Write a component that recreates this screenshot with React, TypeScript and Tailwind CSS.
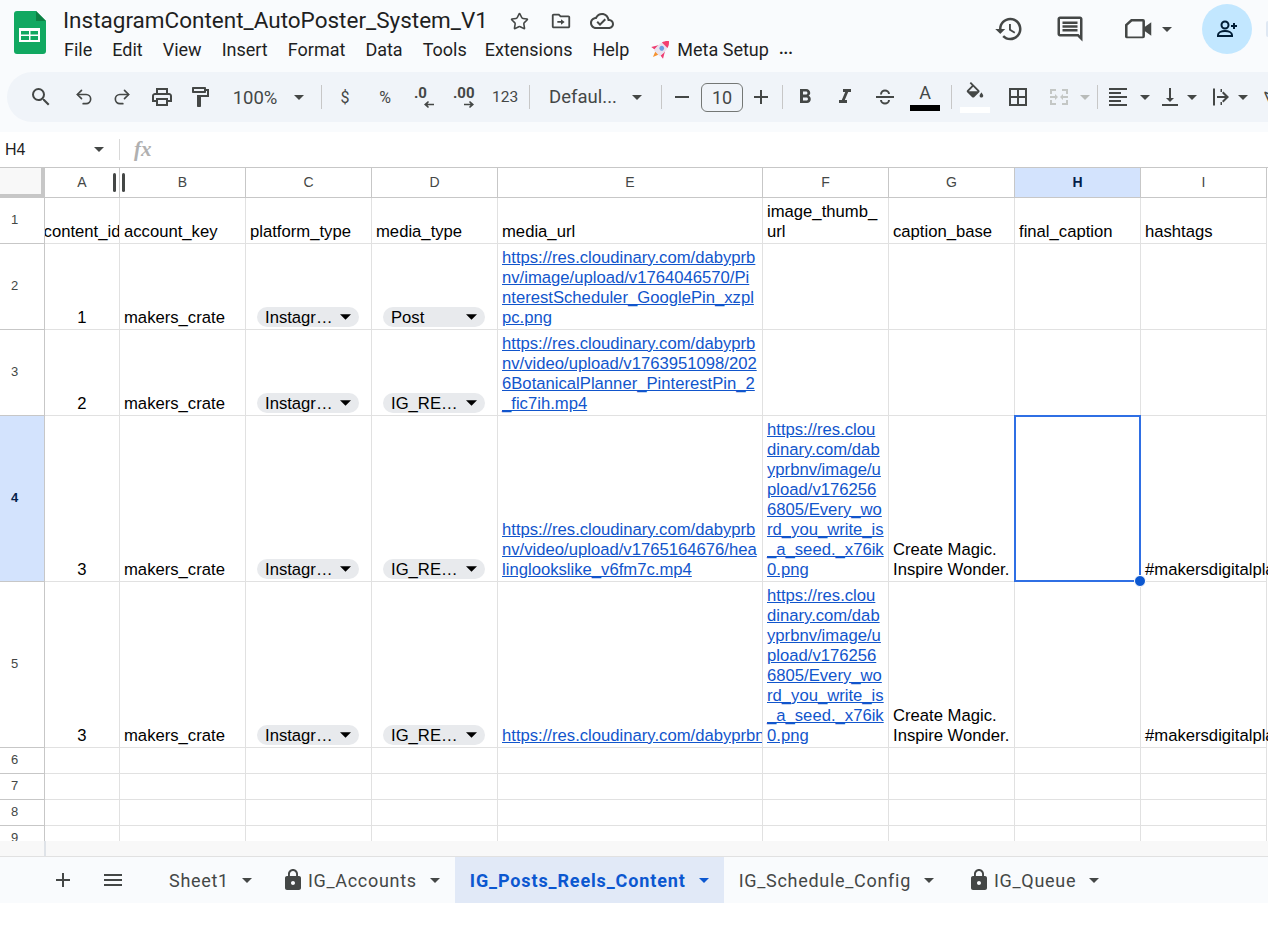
import { Star, Undo2, Redo2 } from 'lucide-react';
import type { ReactNode } from 'react';

// material-style icon
function Icon({ d, className = '' }: { d: string; className?: string }) {
  return (
    <svg viewBox="0 0 24 24" className={`w-6 h-6 shrink-0 fill-current ${className}`}>
      <path d={d} />
    </svg>
  );
}

function Caret({ className = '' }: { className?: string }) {
  return (
    <svg viewBox="0 0 10 5" className={`w-[10px] h-[5px] shrink-0 fill-current ${className}`}>
      <path d="M0 0h10L5 5z" />
    </svg>
  );
}

function Divider({ className = '' }: { className?: string }) {
  return <div className={`w-px h-6 bg-[#c7c7c7] shrink-0 ${className}`} />;
}

const icons = {
  search: 'M15.5 14h-.79l-.28-.27A6.471 6.471 0 0 0 16 9.5 6.5 6.5 0 1 0 9.5 16c1.61 0 3.09-.59 4.23-1.57l.27.28v.79l5 4.99L20.49 19l-4.99-5zm-6 0C7.01 14 5 11.99 5 9.5S7.01 5 9.5 5 14 7.01 14 9.5 11.99 14 9.5 14z',
  print: 'M19 8h-1V3H6v5H5c-1.66 0-3 1.34-3 3v6h4v4h12v-4h4v-6c0-1.66-1.34-3-3-3zM8 5h8v3H8V5zm8 12v2H8v-4h8v2zm2-2v-2H6v2H4v-4c0-.55.45-1 1-1h14c.55 0 1 .45 1 1v4h-2z',
  paint: 'M18 4V3c0-.55-.45-1-1-1H5c-.55 0-1 .45-1 1v4c0 .55.45 1 1 1h12c.55 0 1-.45 1-1V6h1v4H9v11c0 .55.45 1 1 1h2c.55 0 1-.45 1-1v-9h8V4h-3zm-2 2H6V4h10v2z',
  history: 'M13 3c-4.97 0-9 4.03-9 9H1l3.89 3.89.07.14L9 12H6c0-3.87 3.13-7 7-7s7 3.13 7 7-3.13 7-7 7c-1.93 0-3.68-.79-4.94-2.06l-1.42 1.42C8.27 19.99 10.51 21 13 21c4.97 0 9-4.03 9-9s-4.03-9-9-9zm-1 5v5l4.28 2.54.72-1.21-3.5-2.08V8H12z',
  comment: 'M20 2H4c-1.1 0-2 .9-2 2v12c0 1.1.9 2 2 2h14l4 4V4c0-1.1-.9-2-2-2zm0 15.17L18.83 16H4V4h16v13.17zM6 12h12v2H6zm0-3h12v2H6zm0-3h12v2H6z',
  move: 'M20 6h-8l-2-2H4c-1.1 0-2 .9-2 2v12c0 1.1.9 2 2 2h16c1.1 0 2-.9 2-2V8c0-1.1-.9-2-2-2zm0 12H4V6h5.17l2 2H20v10zm-8-4H8v-2h4v-2l4 3-4 3v-2z',
  cloud: 'M19.35 10.04C18.67 6.59 15.64 4 12 4 9.11 4 6.6 5.64 5.35 8.04 2.34 8.36 0 10.91 0 14c0 3.31 2.69 6 6 6h13c2.76 0 5-2.24 5-5 0-2.64-2.05-4.78-4.65-4.96zM19 18H6c-2.21 0-4-1.79-4-4 0-2.05 1.53-3.76 3.56-3.97l1.07-.11.5-.95C8.08 7.14 9.94 6 12 6c2.62 0 4.88 1.86 5.39 4.43l.3 1.5 1.53.11c1.56.1 2.78 1.41 2.78 2.96 0 1.65-1.35 3-3 3zm-9-3.82l-2.09-2.09L6.5 13.5 10 17l6.01-6.01-1.41-1.41z',
  video: 'M4 9l4-3.700h8a1.300 1.300 0 0 1 1.300 1.300V10.500l4.200-3v9l-4.200-3v3.400a1.300 1.300 0 0 1-1.300 1.300H5.300A1.300 1.300 0 0 1 4 17.400zM5.700 9.700V17h9.900V7H8.700z',
  bold: 'M15.6 10.79c.97-.67 1.65-1.77 1.65-2.79 0-2.26-1.75-4-4-4H7v14h7.04c2.09 0 3.71-1.7 3.71-3.79 0-1.52-.86-2.82-2.15-3.42zM10 6.5h3c.83 0 1.5.67 1.5 1.5s-.67 1.5-1.5 1.5h-3v-3zm3.5 9H10v-3h3.5c.83 0 1.5.67 1.5 1.5s-.67 1.5-1.5 1.5z',
  italic: 'M10 4v3h2.21l-3.42 8H6v3h8v-3h-2.21l3.42-8H18V4z',
  fill: 'M16.56 8.94L7.62 0 6.21 1.41l2.38 2.38-5.15 5.15c-.59.59-.59 1.54 0 2.12l5.5 5.5c.29.29.68.44 1.06.44s.77-.15 1.06-.44l5.5-5.5c.59-.58.59-1.53 0-2.12zM5.21 10L10 5.21 14.79 10H5.21zM19 11.5s-2 2.17-2 3.5c0 1.1.9 2 2 2s2-.9 2-2c0-1.33-2-3.5-2-3.5z',
  borders: 'M3 3v18h18V3H3zm8 16H5v-6h6v6zm0-8H5V5h6v6zm8 8h-6v-6h6v6zm0-8h-6V5h6v6z',
  align: 'M15 15H3v2h12v-2zm0-8H3v2h12V7zM3 13h18v-2H3v2zm0 8h18v-2H3v2zM3 3v2h18V3H3z',
  valign: 'M16 13h-3V3h-2v10H8l4 4 4-4zM4 19v2h16v-2H4z',
  wrap: 'M3 3.500h2v17H3zM7 11h8l-3-3 1.400-1.400L19 12l-5.600 5.400L12 16l3-3H7zM10.500 4H12v3h-1.500zM10.500 17H12v3h-1.500z',
  merge: 'M3 4h6v2H5v3H3zM15 4h6v5h-2V6h-4zM3 15h2v3h4v2H3zM19 15h2v5h-6v-2h4zM3 11h5V9l3 3-3 3v-2H3zM21 11h-5V9l-3 3 3 3v-2h5z',
  lock: 'M18 8h-1V6c0-2.76-2.24-5-5-5S7 3.24 7 6v2H6c-1.1 0-2 .9-2 2v10c0 1.1.9 2 2 2h12c1.1 0 2-.9 2-2V10c0-1.1-.9-2-2-2zm-6 9c-1.1 0-2-.9-2-2s.9-2 2-2 2 .9 2 2-.9 2-2 2zm3.1-9H8.9V6c0-1.71 1.39-3.1 3.1-3.1 1.71 0 3.1 1.39 3.1 3.1v2z',
  plus: 'M19 13h-6v6h-2v-6H5v-2h6V5h2v6h6z',
  minus: 'M19 13H5v-2h14z',
  menu: 'M3 18h18v-2H3v2zm0-5h18v-2H3v2zm0-7v2h18V6H3z',
};

function Logo() {
  return (
    <svg viewBox="0 0 32 43" className="w-8 h-[43px] shrink-0">
      <path d="M3 0h19l10 10v30a3 3 0 0 1-3 3H3a3 3 0 0 1-3-3V3a3 3 0 0 1 3-3z" fill="#11a861" />
      <path d="M22 0l10 10h-10z" fill="#0c8043" />
      <path d="M5 17h21v14H5z" fill="#fff" />
      <path d="M7 20h8v3.500H7zM16.500 20h7.500v3.500h-7.500zM7 25h8v4H7zM16.500 25h7.500v4h-7.500z" fill="#11a861" />
    </svg>
  );
}

function Rocket() {
  return (
    <svg viewBox="0 0 20 20" className="w-[19px] h-[19px] shrink-0">
      <g transform="rotate(45 10 10) translate(10 10) scale(1.25) translate(-10 -10)">
        <path d="M8 14h4l-2 5z" fill="#f59331" />
        <path d="M6.500 8l-3.500 6 3.500-.5zM13.500 8l3.500 6-3.500-.5z" fill="#ee3f73" />
        <path d="M10 0c4 3 4.500 8 3.500 14.500h-7C5.500 8 6 3 10 0z" fill="#e9e3ee" />
        <path d="M10 0c1.700 1.300 2.800 3 3.300 5H6.700c.5-2 1.600-3.700 3.300-5z" fill="#f43f6e" />
        <circle cx="10" cy="8.500" r="2" fill="#6aa0e0" />
      </g>
    </svg>
  );
}

const menus = ['File', 'Edit', 'View', 'Insert', 'Format', 'Data', 'Tools'];

function Header() {
  return (
    <div className="h-[72px] flex text-[#1f1f1f] relative">
      <div className="ml-[14px] mt-[11px]">
        <Logo />
      </div>
      <div className="ml-[17px] mt-[5px]">
        <div className="flex items-center h-[32px]">
          <span className="text-[22.500px] font-['Roboto',sans-serif] w-[425px] whitespace-nowrap">InstagramContent_AutoPoster_System_V1</span>
          <Star className="w-[19px] h-[19px] ml-[22px] text-[#444746]" strokeWidth={2} />
          <Icon d={icons.move} className="ml-[21px] w-[22px] h-[22px] text-[#444746]" />
          <Icon d={icons.cloud} className="ml-[18px] w-[24px] h-[24px] text-[#444746]" />
        </div>
        <div className="flex items-center h-[26px] mt-[-1px] gap-[20px] text-[18px] font-['Roboto',sans-serif] ml-px whitespace-nowrap">
          {menus.map((m) => (
            <span key={m}>{m}</span>
          ))}
          <span className="ml-[-7px] pl-[5px]">Extensions</span>
          <span>Help</span>
          <div className="flex items-center gap-[7px] ml-[2px]">
            <Rocket />
            <span>Meta Setup</span>
          </div>
          <span className="ml-[-10px] font-bold text-[16px]">...</span>
        </div>
      </div>
      <div className="flex items-center ml-auto mt-[-14px] text-[#444746]">
        <Icon d={icons.history} className="w-[30px] h-[30px]" />
        <Icon d={icons.comment} className="w-[30px] h-[30px] ml-[31px]" />
        <Icon d={icons.video} className="w-[36px] h-[36px] ml-[34px]" />
        <Caret className="ml-[7px]" />
        <div className="w-[50px] h-[50px] ml-[30px] rounded-full bg-[#c2e7ff] flex items-center justify-center text-[#001d35]">
          <svg viewBox="0 0 24 24" className="w-6 h-6 fill-none stroke-current stroke-2">
            <circle cx="10" cy="8" r="3.500" />
            <path d="M3 19v-1c0-2.500 3.500-4 7-4s7 1.500 7 4v1z" />
            <path d="M19 6v6M16 9h6" />
          </svg>
        </div>
        <div className="w-[2px] h-[16px] ml-[14px] bg-[#dfe8f3] rounded-l-full" />
      </div>
    </div>
  );
}

function TextTool({ children, className = '' }: { children: ReactNode; className?: string }) {
  return <span className={`shrink-0 text-center whitespace-nowrap ${className}`}>{children}</span>;
}

function Arrow({ left, className = '' }: { left?: boolean; className?: string }) {
  return (
    <svg viewBox="0 0 10 7" className={`w-[10px] h-[7px] shrink-0 fill-current ${className}`}>
      <path d={left ? 'M10 2.700H3.500L5 1 4 0 0 3.500 4 7l1-1-1.500-1.700H10z' : 'M0 2.700h6.500L5 1l1-1 4 3.500L6 7 5 6l1.500-1.700H0z'} />
    </svg>
  );
}

function Toolbar() {
  return (
    <div className="h-[50px] ml-[7px] pl-[22px] rounded-l-[25px] bg-[#f0f4f9] flex items-center overflow-hidden text-[#444746] font-['Roboto',sans-serif]">
      <Icon d={icons.search} />
      <Undo2 className="w-[20px] h-[20px] ml-[21px] shrink-0" strokeWidth={2} />
      <Redo2 className="w-[20px] h-[20px] ml-[18px] shrink-0" strokeWidth={2} />
      <Icon d={icons.print} className="ml-[18px]" />
      <Icon d={icons.paint} className="ml-[14px]" />
      <TextTool className="ml-[20px] mt-[3px] w-[46px] text-[18.500px]">100%</TextTool>
      <Caret className="ml-[16px]" />
      <Divider className="ml-[17px]" />
      <TextTool className="ml-[11px] mt-[2px] w-[24px] text-[16px]">$</TextTool>
      <TextTool className="ml-[16px] mt-[2px] w-[24px] text-[16px]">%</TextTool>
      <div className="ml-[15px] w-[24px] shrink-0 flex flex-col items-start">
        <span className="text-[15px] h-[13px] leading-[13px] font-bold ml-[2px]">.0</span>
        <Arrow left className="mt-px ml-[12px]" />
      </div>
      <div className="ml-[15px] w-[24px] shrink-0 flex flex-col items-start">
        <span className="text-[15px] h-[13px] leading-[13px] font-bold ml-[2px]">.00</span>
        <Arrow className="mt-px ml-[13px]" />
      </div>
      <TextTool className="ml-[17px] mt-[2px] w-[24px] text-[15.500px]">123</TextTool>
      <Divider className="ml-[13px]" />
      <TextTool className="ml-[19px] mt-[2px] w-[68px] text-[18.500px]">Defaul...</TextTool>
      <Caret className="ml-[15px]" />
      <Divider className="ml-[19px]" />
      <Icon d={icons.minus} className="ml-[8px]" />
      <div className="ml-[7px] w-[42px] h-[29px] shrink-0 rounded-[6px] border border-[#747775] flex items-center justify-center text-[18px]">10</div>
      <Icon d={icons.plus} className="ml-[6px]" />
      <Divider className="ml-[9px]" />
      <Icon d={icons.bold} className="ml-[10px]" />
      <Icon d={icons.italic} className="ml-[16px]" />
      <svg viewBox="0 0 24 24" className="ml-[16px] w-6 h-6 shrink-0 fill-none stroke-current stroke-2">
        <path d="M3 12h18M8 9.500C8 7 10 5.500 12 5.500S16 7 16 9M8 15c0 2 2 3.500 4 3.500s4-1.500 4-3.500" />
      </svg>
      <div className="ml-[13px] w-[30px] shrink-0 flex flex-col items-center">
        <span className="text-[18px] leading-[20px]">A</span>
        <div className="w-[30px] h-[6px] bg-black mt-[2px]" />
      </div>
      <Divider className="ml-[11px]" />
      <div className="ml-[8px] w-[30px] shrink-0 flex flex-col items-center">
        <Icon d={icons.fill} className="w-[22px] h-[22px] mb-[3px]" />
        <div className="w-[30px] h-[6px] bg-white" />
      </div>
      <Icon d={icons.borders} className="ml-[16px]" />
      <Icon d={icons.merge} className="ml-[17px] text-[#c4c7c5]" />
      <Caret className="ml-[9px] text-[#b8bbb9]" />
      <Divider className="ml-[7px]" />
      <Icon d={icons.align} className="ml-[8px]" />
      <Caret className="ml-[10px]" />
      <Icon d={icons.valign} className="ml-[8px]" />
      <Caret className="ml-[5px]" />
      <Icon d={icons.wrap} className="ml-[13px]" />
      <Caret className="ml-[4px]" />
      <span className="ml-[16px] text-[17px] -rotate-45 shrink-0">A</span>
    </div>
  );
}

function FormulaBar() {
  return (
    <div className="h-[36px] bg-white flex items-center border-b border-[#c7c7c7] font-['Liberation_Sans',sans-serif] text-[#1f1f1f]">
      <span className="ml-[5px] w-[89px] text-[16px]">H4</span>
      <Caret className="text-[#444746]" />
      <div className="w-px h-[21px] bg-[#d9d9d9] ml-[15px]" />
      <span className="ml-[14px] font-['Liberation_Serif',serif] italic font-bold text-[21px] text-[#b0b0b0]">fx</span>
    </div>
  );
}

function Cell({ children, className = '' }: { children?: ReactNode; className?: string }) {
  return (
    <div className={`flex items-end overflow-hidden border-r border-b border-[#e1e1e1] pl-[4px] pr-[3px] pb-[1px] leading-[20px] text-black ${className}`}>
      {children}
    </div>
  );
}

function HeadCell({ label, active }: { label: string; active?: boolean }) {
  return (
    <div className={`flex items-center justify-center border-r border-b border-[#c7c7c7] text-[14px] ${active ? 'bg-[#d3e3fd] font-bold text-[#041e49]' : 'text-[#444746]'}`}>
      {label}
    </div>
  );
}

function RowNum({ label, active }: { label: string; active?: boolean }) {
  return (
    <div className={`flex items-center justify-center border-r border-b border-[#c7c7c7] pr-[15px] pb-[2px] text-[13px] ${active ? 'bg-[#d3e3fd] font-bold text-[#041e49]' : 'text-[#444746]'}`}>
      {label}
    </div>
  );
}

function Chip({ label }: { label: string }) {
  return (
    <div className="w-[102px] h-[20px] ml-[7px] mb-px shrink-0 rounded-full bg-[#e8eaed] flex items-center pl-[8px] pr-[8px] justify-between whitespace-nowrap">
      <span className="mt-[2px]">{label}</span>
      <Caret className="w-[11px] h-[6px] text-black" />
    </div>
  );
}

// line breaks are written out, they follow the reference's wrapping
function Link({ text }: { text: string }) {
  return <a className="text-[#1155cc] underline whitespace-pre">{text}</a>;
}

const THUMB = 'https://res.clou\ndinary.com/dab\nyprbnv/image/u\npload/v176256\n6805/Every_wo\nrd_you_write_is\n_a_seed._x76ik\n0.png';
const headers = ['A', 'B', 'C', 'D', 'E', 'F', 'G', 'H', 'I'];
const emptyRows = ['6', '7', '8', '9'];

function DataRow({ num, id, type, url, thumb, active, selected }: {
  num: string; id: string; type: string; url: string; thumb?: boolean; active?: boolean; selected?: boolean;
}) {
  return (
    <>
      <RowNum label={num} active={active} />
      <Cell className="justify-center !px-0">{id}</Cell>
      <Cell>makers_crate</Cell>
      <Cell><Chip label="Instagr…" /></Cell>
      <Cell><Chip label={type} /></Cell>
      <Cell><Link text={url} /></Cell>
      <Cell>{thumb && <Link text={THUMB} />}</Cell>
      <Cell>{thumb && <span className="whitespace-nowrap">Create Magic.<br />Inspire Wonder.</span>}</Cell>
      {selected ? (
        <div className="relative border-r border-b border-[#e1e1e1]">
          <div className="absolute top-[-1px] left-[-1px] w-[127px] h-[167px] border-2 border-[#2f6fe4]" />
          <div className="absolute right-[-6px] bottom-[-6px] w-[12px] h-[12px] rounded-full bg-[#0b57d0] border border-white z-10" />
        </div>
      ) : (
        <Cell />
      )}
      <Cell className="!overflow-visible whitespace-nowrap">{thumb && '#makersdigitalplanners'}</Cell>
      <div />
    </>
  );
}

function Sheet() {
  return (
    <div className="h-[673px] overflow-hidden bg-white font-['Liberation_Sans',sans-serif] text-[16.670px]">
      <div className="grid grid-cols-[45px_75px_126px_126px_126px_265px_126px_126px_126px_126px_1px] grid-rows-[30px_46px_86px_86px_166px_166px_26px_26px_26px_26px]">
        {/* Column headers */}
        <div className="bg-[#f8f8f8] border-r-[4px] border-b-[4px] border-[#c7c7c7]" />
        <div className="relative flex items-center justify-center border-r border-b border-[#c7c7c7] text-[14px] text-[#444746]">
          A
          <div className="absolute left-[68px] top-[5px] w-[3px] h-[19px] rounded-sm bg-[#444746]" />
        </div>
        <div className="relative flex items-center justify-center border-r border-b border-[#c7c7c7] text-[14px] text-[#444746]">
          B
          <div className="absolute left-[2px] top-[5px] w-[3px] h-[19px] rounded-sm bg-[#444746]" />
        </div>
        {headers.slice(2).map((h) => (
          <HeadCell key={h} label={h} active={h === 'H'} />
        ))}
        <div />

        {/* Row 1 */}
        <RowNum label="1" />
        <Cell className="justify-center !px-0 whitespace-nowrap">content_id</Cell>
        <Cell>account_key</Cell>
        <Cell>platform_type</Cell>
        <Cell>media_type</Cell>
        <Cell>media_url</Cell>
        <Cell><span className="whitespace-pre">{'image_thumb_\nurl'}</span></Cell>
        <Cell>caption_base</Cell>
        <Cell>final_caption</Cell>
        <Cell>hashtags</Cell>
        <div />

        <DataRow num="2" id="1" type="Post" url={'https://res.cloudinary.com/dabyprb\nnv/image/upload/v1764046570/Pi\nnterestScheduler_GooglePin_xzpl\npc.png'} />
        <DataRow num="3" id="2" type="IG_RE…" url={'https://res.cloudinary.com/dabyprb\nnv/video/upload/v1763951098/202\n6BotanicalPlanner_PinterestPin_2\n_fic7ih.mp4'} />
        <DataRow num="4" id="3" type="IG_RE…" url={'https://res.cloudinary.com/dabyprb\nnv/video/upload/v1765164676/hea\nlinglookslike_v6fm7c.mp4'} thumb active selected />
        <DataRow num="5" id="3" type="IG_RE…" url="https://res.cloudinary.com/dabyprbnv/video/upload/v1765164676/healinglookslike_v6fm7c.mp4" thumb />

        {emptyRows.map((n) => (
          <div key={n} className="contents">
            <RowNum label={n} />
            {headers.map((h) => (
              <Cell key={h} />
            ))}
            <div />
          </div>
        ))}
      </div>
    </div>
  );
}

function Tab({ label, locked, active, className = '' }: { label: string; locked?: boolean; active?: boolean; className?: string }) {
  return (
    <div className={`h-full flex items-center shrink-0 ${active ? 'bg-[#e1e9f7] text-[#0b57d0] font-bold tracking-[0.870px]' : 'text-[#444746] font-normal tracking-[0.700px]'} ${className}`}>
      {locked && <Icon d={icons.lock} className="w-6 h-6 mr-[3px] ml-[-3px]" />}
      <span>{label}</span>
      <Caret className="ml-[13px]" />
    </div>
  );
}

function Tabs() {
  return (
    <>
      <div className="h-[16px] bg-[#f8f8f8] border-b border-[#e1e1e1] pl-[44px]">
        <div className="w-[2px] h-[15px] bg-[#dfe3e8]" />
      </div>
      <div className="h-[46px] bg-[#f9fbfd] flex items-center font-['Roboto',sans-serif] text-[18px] text-[#444746]">
        <Icon d={icons.plus} className="ml-[51px]" />
        <Icon d={icons.menu} className="ml-[26px]" />
        <Tab label="Sheet1" className="ml-[44px]" />
        <Tab label="IG_Accounts" locked className="ml-[32px]" />
        <Tab label="IG_Posts_Reels_Content" active className="ml-[15px] pl-[15px] pr-[15px]" />
        <Tab label="IG_Schedule_Config" className="ml-[15px]" />
        <Tab label="IG_Queue" locked className="ml-[36px]" />
      </div>
    </>
  );
}

export default function App() {
  return (
    <div className="w-[1268px] h-[925px] overflow-hidden bg-white">
      <div className="h-[132px] bg-[#f9fbfd]">
        <Header />
        <Toolbar />
      </div>
      <FormulaBar />
      <Sheet />
      <Tabs />
    </div>
  );
}
